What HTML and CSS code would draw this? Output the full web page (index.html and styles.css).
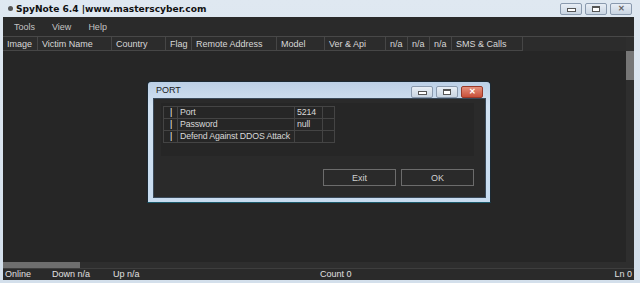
FILE: index.html
```html
<!DOCTYPE html>
<html lang="en">
<head>
    <meta charset="UTF-8">
    <title>SpyNote 6.4</title>
    <link rel="stylesheet" href="styles.css">
</head>
<body>
    <div class="window">
        <div class="titlebar">
            <span class="app-icon"></span>
            <span class="title">SpyNote 6.4 |www.masterscyber.com</span>
            <div class="caption-btns">
                <span class="cbtn"><i class="g-min"></i></span>
                <span class="cbtn"><i class="g-max"></i></span>
                <span class="cbtn"><i class="g-close">&#x2715;</i></span>
            </div>
        </div>

        <div class="frame">
            <div class="menubar">
                <a href="#">Tools</a>
                <a href="#">View</a>
                <a href="#">Help</a>
            </div>

            <div class="listview">
                <div class="list">
                    <div class="list-head">
                        <span class="col" style="width:35px">Image</span>
                        <span class="col" style="width:74px">Victim Name</span>
                        <span class="col" style="width:54px">Country</span>
                        <span class="col" style="width:26px">Flag</span>
                        <span class="col" style="width:85px">Remote Address</span>
                        <span class="col" style="width:48px">Model</span>
                        <span class="col" style="width:61px">Ver &amp; Api</span>
                        <span class="col" style="width:22px">n/a</span>
                        <span class="col" style="width:22px">n/a</span>
                        <span class="col" style="width:22px">n/a</span>
                        <span class="col" style="width:71px">SMS &amp; Calls</span>
                    </div>
                    <div class="list-body"></div>
                    <div class="hscroll"><span class="hthumb"></span></div>
                </div>
                <div class="vscroll"><span class="vthumb"></span></div>
            </div>

            <div class="statusbar">
                <span class="st-online">Online</span>
                <span class="st-down">Down n/a</span>
                <span class="st-up">Up n/a</span>
                <span class="st-count">Count 0</span>
                <span class="st-ln">Ln 0</span>
            </div>
        </div>

        <div class="dialog">
            <div class="dlg-title">
                <span>PORT</span>
                <div class="caption-btns dlg-btns">
                    <span class="cbtn"><i class="g-min"></i></span>
                    <span class="cbtn"><i class="g-max"></i></span>
                    <span class="cbtn red"><i class="g-close">&#x2715;</i></span>
                </div>
            </div>
            <div class="dlg-body">
                <div class="prop-panel">
                    <table class="props">
                        <colgroup>
                            <col class="c-mark">
                            <col class="c-name">
                            <col class="c-val">
                            <col class="c-pad">
                        </colgroup>
                        <tr><td class="mark">|</td><td>Port</td><td>5214</td><td></td></tr>
                        <tr><td class="mark">|</td><td>Password</td><td>null</td><td></td></tr>
                        <tr><td class="mark">|</td><td>Defend Against DDOS Attack</td><td></td><td></td></tr>
                    </table>
                </div>
                <div class="dlg-actions">
                    <button>Exit</button>
                    <button>OK</button>
                </div>
            </div>
        </div>
    </div>
</body>
</html>
```

FILE: styles.css
```css
body {
    margin: 0;
    font-family: "Liberation Sans", Arial, sans-serif;
    font-size: 9px;
    background: #d9e4ef;
    color: #d0d0d0;
    overflow: hidden;
}
.window {
    position: relative;
    width: 640px;
    height: 283px;
    display: flex;
    flex-direction: column;
    background: linear-gradient(#dfe8f1, #d3dfeb);
}
.titlebar {
    height: 17px;
    display: flex;
    align-items: center;
    padding-left: 8px;
}
.app-icon {
    width: 5px;
    height: 5px;
    border-radius: 50%;
    background: #555;
    margin-right: 3px;
}
.title {
    font-family: "DejaVu Sans", Verdana, sans-serif;
    font-weight: bold;
    font-size: 9.1px;
    color: #111;
}
.caption-btns {
    margin-left: auto;
    margin-right: 8px;
    display: flex;
    gap: 3px;
}
.cbtn {
    width: 20px;
    height: 10px;
    border: 1px solid #8a9aae;
    border-radius: 2px;
    background: linear-gradient(#e8eef5, #c9d5e2);
    display: flex;
    align-items: center;
    justify-content: center;
}
.cbtn.red {
    border-color: #9a3a2a;
    background: linear-gradient(#e4907c, #c8503a);
}
.cbtn i {
    display: block;
    font-style: normal;
}
.g-min {
    width: 7px;
    height: 2px;
    background: #fff;
    border: 1px solid #555;
    margin-top: 3px;
}
.g-max {
    width: 6px;
    height: 3px;
    border: 1px solid #555;
    border-top-width: 2px;
    background: #fff;
}
.g-close {
    font-size: 8px;
    line-height: 8px;
    color: #666;
    font-weight: bold;
}
.cbtn.red .g-close {
    color: #fff;
}

.frame {
    flex: 1;
    margin: 0 6px 3px 3px;
    background: #2a2a2a;
    display: flex;
    flex-direction: column;
}
.menubar {
    height: 19px;
    display: flex;
    align-items: center;
    padding-left: 11px;
    border-bottom: 1px solid #484848;
}
.menubar a {
    color: #c4c4c4;
    text-decoration: none;
    margin-right: 17px;
}
.listview {
    flex: 1;
    display: flex;
    border-bottom: 1px solid #3e3e3e;
}
.list {
    flex: 1;
    display: flex;
    flex-direction: column;
    background: #262626;
}
.list-head {
    height: 14px;
    display: flex;
    background: #2c2c2c;
}
.col {
    box-sizing: border-box;
    padding-left: 4px;
    line-height: 14px;
    border-right: 1px solid #464646;
    border-bottom: 1px solid #464646;
    color: #d8d8d8;
    white-space: nowrap;
}
.list-body {
    flex: 1;
}
.hscroll {
    height: 6px;
    background: #2e2e2e;
}
.hthumb {
    display: block;
    width: 77px;
    height: 6px;
    background: #6e6e6e;
}
.vscroll {
    width: 8px;
    background: #2e2e2e;
    padding-top: 14px;
}
.vthumb {
    display: block;
    height: 29px;
    background: #767676;
}
.statusbar {
    height: 11px;
    position: relative;
    line-height: 11px;
    color: #e0e0e0;
}
.statusbar span {
    position: absolute;
    top: 0;
}
.st-online { left: 2px; }
.st-down { left: 49px; }
.st-up { left: 110px; }
.st-count { left: 317px; }
.st-ln { right: 2px; }

.dialog {
    position: absolute;
    left: 147px;
    top: 81px;
    width: 344px;
    height: 122px;
    box-sizing: border-box;
    border: 1px solid #1c2a34;
    border-bottom-color: #1b5a6a;
    border-radius: 4px 4px 0 0;
    background: linear-gradient(#bcd0e6, #d2e2f2 20%, #c8dcf0);
    display: flex;
    flex-direction: column;
    padding: 0 4px 4px 5px;
}
.dlg-title {
    height: 16px;
    display: flex;
    align-items: center;
    padding-left: 3px;
    color: #1a1a1a;
    font-size: 9px;
}
.dlg-btns {
    margin-right: 3px;
    margin-top: 3px;
}
.dlg-body {
    flex: 1;
    background: #2a2a2a;
    border: 1px solid #3a4a5a;
    padding: 4px 11px 0 7px;
}
.prop-panel {
    height: 53px;
    background: #262626;
    padding: 3px 0 0 2px;
    box-sizing: border-box;
}
.props {
    border-collapse: collapse;
    table-layout: fixed;
    width: 171px;
}
.c-mark { width: 14px; }
.c-name { width: 117px; }
.c-val { width: 28px; }
.c-pad { width: 12px; }
.props td {
    border: 1px solid #444;
    height: 11px;
    padding: 0 1px 0 2px;
    line-height: 11px;
    font-size: 8.8px;
    letter-spacing: -0.15px;
    color: #d8d8d8;
    white-space: nowrap;
}
.props .mark {
    text-align: center;
    color: #f0f0f0;
}
.dlg-actions {
    display: flex;
    justify-content: flex-end;
    gap: 5px;
    margin-top: 13px;
}
.dlg-actions button {
    width: 73px;
    height: 17px;
    background: #2a2a2a;
    border: 1px solid #6c6c6c;
    color: #d0d0d0;
    font-family: "Liberation Sans", Arial, sans-serif;
    font-size: 9px;
    padding: 0;
}
```
